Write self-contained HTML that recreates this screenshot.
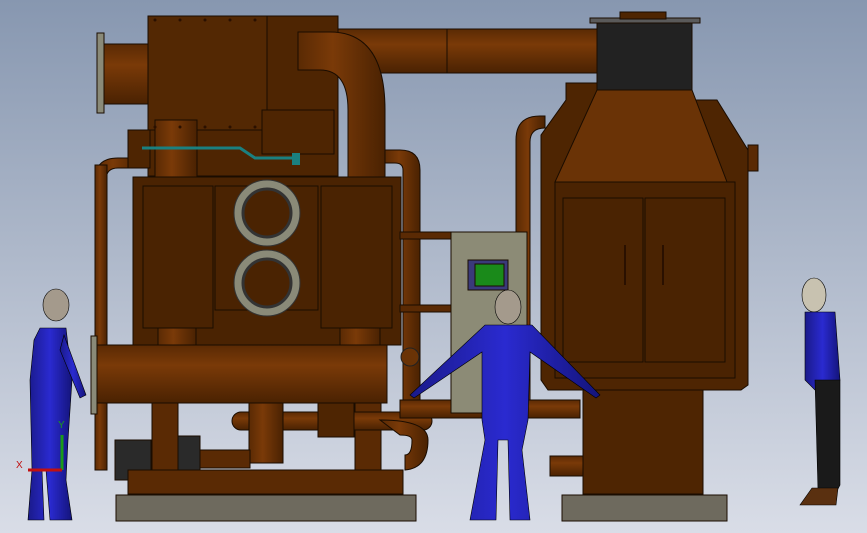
<!DOCTYPE html>
<html><head><style>html,body{margin:0;padding:0;width:867px;height:533px;overflow:hidden}</style></head>
<body>
<svg width="867" height="533" viewBox="0 0 867 533" xmlns="http://www.w3.org/2000/svg" font-family="Liberation Sans, sans-serif">
<defs>
<linearGradient id="bg" x1="0" y1="0" x2="0" y2="1"><stop offset="0" stop-color="#8797b0"/><stop offset="1" stop-color="#d9dde7"/></linearGradient>
<linearGradient id="pv" x1="0" y1="0" x2="0" y2="1"><stop offset="0" stop-color="#5a2a04"/><stop offset=".35" stop-color="#7a3a08"/><stop offset="1" stop-color="#4a2202"/></linearGradient>
<linearGradient id="ph" x1="0" y1="0" x2="1" y2="0"><stop offset="0" stop-color="#5a2a04"/><stop offset=".4" stop-color="#7a3a08"/><stop offset="1" stop-color="#4a2202"/></linearGradient>
<linearGradient id="blue" x1="0" y1="0" x2="1" y2="0"><stop offset="0" stop-color="#1a1a8a"/><stop offset=".5" stop-color="#2a2ad0"/><stop offset="1" stop-color="#14147a"/></linearGradient>
</defs>
<rect width="867" height="533" fill="url(#bg)"/>
<g stroke="#1a0c00" stroke-width="1">
<rect x="330" y="29" width="270" height="44" fill="url(#pv)"/>
<line x1="447" y1="29" x2="447" y2="73"/>
<rect x="104" y="44" width="48" height="60" fill="url(#pv)"/>
<rect x="97" y="33" width="7" height="80" fill="#8a8a78"/>
<path d="M95 180 Q95 158 118 158 L140 158 L140 168 L118 168 Q106 168 106 180 L106 470 L95 470 Z" fill="url(#ph)"/>
<rect x="95" y="165" width="12" height="305" fill="url(#ph)"/>
<path d="M385 150 L400 150 Q420 150 420 170 L420 420 L403 420 L403 170 Q403 163 395 163 L385 163 Z" fill="url(#ph)"/>
<rect x="148" y="16" width="190" height="160" fill="#4e2502"/>
<rect x="148" y="16" width="119" height="114" fill="#532803"/>
<rect x="262" y="110" width="72" height="44" fill="#4e2502"/>
<rect x="128" y="130" width="22" height="38" fill="#4e2502"/>
<path d="M298 32 L330 32 Q385 32 385 110 L385 180 L348 180 L348 110 Q348 70 320 70 L298 70 Z" fill="url(#ph)"/>
<rect x="155" y="120" width="42" height="60" fill="url(#ph)"/>
<rect x="133" y="177" width="268" height="168" fill="#4a2302"/>
<rect x="158" y="320" width="38" height="30" fill="url(#ph)"/>
<rect x="340" y="320" width="40" height="30" fill="url(#ph)"/>
<rect x="143" y="186" width="70" height="142" fill="#4a2302"/>
<rect x="215" y="186" width="103" height="124" fill="#4a2302"/>
<rect x="321" y="186" width="71" height="142" fill="#4a2302"/>
<rect x="97" y="345" width="290" height="58" fill="url(#pv)"/>
<rect x="91" y="336" width="6" height="78" fill="#8a8a78"/>
<rect x="152" y="403" width="26" height="68" fill="#5a2a04"/>
<rect x="355" y="403" width="26" height="68" fill="#5a2a04"/>
<rect x="232" y="412" width="200" height="18" rx="9" fill="url(#pv)"/>
<path d="M380 420 Q428 420 428 440 Q428 468 405 470 L405 455 Q412 455 412 440 Q412 435 400 435 Z" fill="url(#ph)"/>
<rect x="249" y="403" width="34" height="60" fill="url(#ph)"/>
<rect x="318" y="403" width="36" height="34" fill="#4e2502"/>
<rect x="115" y="440" width="36" height="40" fill="#2a2a2a"/>
<rect x="178" y="436" width="22" height="34" fill="#2a2a2a"/>
<rect x="200" y="450" width="50" height="18" fill="#5a2a04"/>
<rect x="128" y="470" width="275" height="24" fill="#5a2a04"/>
<rect x="116" y="495" width="300" height="26" fill="#6e6a5e"/>
<rect x="400" y="232" width="52" height="7" fill="#5a2a04"/>
<rect x="400" y="305" width="52" height="7" fill="#5a2a04"/>
<rect x="400" y="400" width="180" height="18" fill="url(#pv)"/>
<path d="M516 140 Q516 116 540 116 L545 116 L545 128 Q530 128 530 142 L530 400 L516 400 Z" fill="url(#ph)"/>
<rect x="451" y="232" width="76" height="181" fill="#8c8b76"/>
<rect x="468" y="260" width="40" height="30" fill="#3a3a7a"/>
<rect x="475" y="264" width="29" height="22" fill="#1a8a1a"/>
<path d="M566 83 L692 83 L692 100 L717 100 L748 150 L748 385 L741 390 L548 390 L541 380 L541 135 L566 100 Z" fill="#4e2502"/>
<path d="M597 90 L692 90 L727 182 L555 182 Z" fill="#6a3306"/>
<rect x="597" y="22" width="95" height="68" fill="#222"/>
<rect x="590" y="18" width="110" height="5" fill="#5a5a5a"/>
<rect x="620" y="12" width="46" height="7" fill="#4e2502"/>
<rect x="555" y="182" width="180" height="196" fill="#4a2302"/>
<rect x="563" y="198" width="80" height="164" fill="#4a2302"/>
<rect x="645" y="198" width="80" height="164" fill="#4a2302"/>
<rect x="748" y="145" width="10" height="26" fill="#5a2a04"/>
<rect x="550" y="456" width="35" height="20" fill="url(#pv)"/>
<rect x="583" y="390" width="120" height="104" fill="#4e2502"/>
<rect x="562" y="495" width="165" height="26" fill="#6e6a5e"/>
</g>
<g fill="#2a1000">
<circle cx="155" cy="20" r="1.5"/><circle cx="180" cy="20" r="1.5"/><circle cx="205" cy="20" r="1.5"/><circle cx="230" cy="20" r="1.5"/><circle cx="255" cy="20" r="1.5"/>
<circle cx="155" cy="127" r="1.5"/><circle cx="180" cy="127" r="1.5"/><circle cx="205" cy="127" r="1.5"/><circle cx="230" cy="127" r="1.5"/><circle cx="255" cy="127" r="1.5"/>
</g>
<path d="M142 148 L240 148 L255 158 L295 158" stroke="#1a8080" stroke-width="3" fill="none"/>
<rect x="292" y="153" width="8" height="12" fill="#1a8080"/>
<g stroke="#333" stroke-width="1">
<circle cx="267" cy="213" r="33" fill="#8a8a78"/><circle cx="267" cy="213" r="24" fill="#4a2302" stroke-width="3"/>
<circle cx="267" cy="283" r="33" fill="#8a8a78"/><circle cx="267" cy="283" r="24" fill="#4a2302" stroke-width="3"/>
</g>
<circle cx="410" cy="357" r="9" fill="#6a3306" stroke="#222"/>
<rect x="624" y="245" width="2" height="40" fill="#2a1000"/><rect x="662" y="245" width="2" height="40" fill="#2a1000"/>
<g stroke="#000" stroke-width="0.6">
<ellipse cx="56" cy="305" rx="13" ry="16" fill="#a49a8c"/>
<path d="M40 328 L66 328 L72 380 L68 440 L66 480 L72 520 L50 520 L46 470 L42 470 L44 520 L28 520 L32 470 L30 380 L34 340 Z" fill="url(#blue)"/>
<path d="M64 335 L86 395 L80 398 L60 350 Z" fill="url(#blue)"/>
<ellipse cx="508" cy="307" rx="13" ry="17" fill="#a49a8c"/>
<path d="M485 325 L532 325 L600 395 L596 398 L530 352 L528 420 L522 450 L530 520 L510 520 L508 440 L498 440 L496 520 L470 520 L485 440 L482 420 L482 352 L414 398 L410 395 Z" fill="url(#blue)"/>
<ellipse cx="814" cy="295" rx="12" ry="17" fill="#c8c2b0"/>
<path d="M805 312 L835 312 L840 380 L815 390 L805 380 Z" fill="url(#blue)"/>
<path d="M815 380 L840 380 L840 485 L832 500 L818 490 Z" fill="#1a1a1a"/>
<path d="M812 488 L838 488 L836 505 L800 505 Z" fill="#5a3010"/>
</g>
<path d="M62 470 L62 435" stroke="#1a9a1a" stroke-width="3"/>
<path d="M28 470 L62 470" stroke="#c01010" stroke-width="3"/>
<text x="16" y="468" font-size="10" fill="#c01010">X</text>
<text x="58" y="428" font-size="10" fill="#1a9a1a">Y</text>
</svg>
</body></html>
